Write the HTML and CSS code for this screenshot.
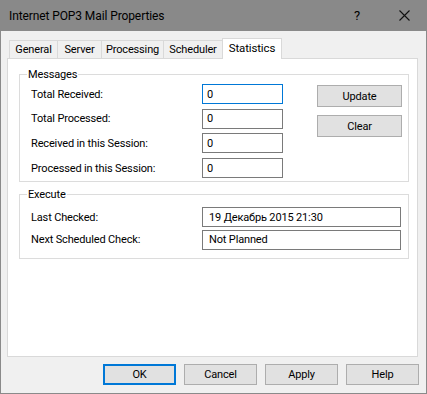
FILE: index.html
```html
<!DOCTYPE html>
<html>
<head>
<meta charset="utf-8">
<link rel="stylesheet" href="styles.css">
</head>
<body>
<div class="window">
  <div class="titlebar">
    <span class="title">Internet POP3 Mail Properties</span>
    <span class="help">?</span>
    <span class="close">
      <svg width="11" height="11" viewBox="0 0 11 11"><path d="M0.5 0.5 L10.5 10.5 M10.5 0.5 L0.5 10.5" stroke="#111" stroke-width="1.1" fill="none"/></svg>
    </span>
  </div>
  <div class="tabs">
    <div class="tab t-general">General</div>
    <div class="tab t-server">Server</div>
    <div class="tab t-processing">Processing</div>
    <div class="tab t-scheduler">Scheduler</div>
    <div class="tab t-statistics active">Statistics</div>
  </div>
  <div class="panel">
    <div class="group messages">
      <span class="group-title">Messages</span>
      <div class="msg-body">
        <div class="form-grid">
          <label>Total Received:</label><div class="field focused">0</div>
          <label>Total Processed:</label><div class="field">0</div>
          <label>Received in this Session:</label><div class="field">0</div>
          <label>Processed in this Session:</label><div class="field">0</div>
        </div>
        <div class="side-buttons">
          <div class="btn side">Update</div>
          <div class="btn side">Clear</div>
        </div>
      </div>
    </div>
    <div class="group execute">
      <span class="group-title">Execute</span>
      <div class="exec-grid">
        <label>Last Checked:</label><div class="field wide">19 Декабрь 2015 21:30</div>
        <label>Next Scheduled Check:</label><div class="field wide">Not Planned</div>
      </div>
    </div>
  </div>
  <div class="footer">
    <div class="btn foot default">OK</div>
    <div class="btn foot">Cancel</div>
    <div class="btn foot">Apply</div>
    <div class="btn foot">Help</div>
  </div>
</div>
</body>
</html>
```
FILE: styles.css
```css
* { box-sizing: border-box; }
html, body { margin: 0; padding: 0; background: #f0f0f0; }
body {
  font-family: Roboto, "Liberation Sans", sans-serif;
  font-size: 11px;
  letter-spacing: -0.15px;
  color: #000;
}
.window {
  width: 427px;
  height: 394px;
  border: 1px solid #8a8a8a;
  border-top: 0;
  background: #f0f0f0;
  display: flex;
  flex-direction: column;
}
.titlebar {
  height: 31px;
  margin: 0 -1px;
  background: #898989;
  display: flex;
  align-items: center;
  padding-left: 9px;
  flex-shrink: 0;
}
.title {
  font-size: 12px;
  letter-spacing: -0.1px;
  color: #000;
  flex: 1;
}
.help {
  font-size: 13px;
  width: 24px;
  text-align: center;
  margin-right: 30px;
}
.close {
  width: 14px;
  margin-right: 14px;
  display: flex;
  align-items: center;
}
.tabs {
  display: flex;
  align-items: flex-end;
  height: 20px;
  margin-top: 7px;
  margin-left: 8px;
  position: relative;
  z-index: 1;
  flex-shrink: 0;
}
.tab {
  height: 18px;
  border: 1px solid #d9d9d9;
  border-bottom: 0;
  background: #f0f0f0;
  display: flex;
  align-items: center;
  justify-content: center;
  margin-left: -1px;
}
.tab:first-child { margin-left: 0; }
.t-general { width: 49px; }
.t-server { width: 45px; }
.t-processing { width: 63px; }
.t-scheduler { width: 60px; }
.tab.active {
  width: 60px;
  height: 21px;
  margin-bottom: -1px;
  background: #fff;
  padding-bottom: 2px;
  font-size: 11.5px;
}
.panel {
  margin-left: 6px;
  width: 411px;
  height: 299px;
  background: #fff;
  border: 1px solid #d9d9d9;
  padding: 15px 0 0 11px;
  flex-shrink: 0;
}
.group {
  position: relative;
  border: 1px solid #dcdcdc;
  width: 390px;
}
.group-title {
  position: absolute;
  top: -8px;
  left: 7px;
  background: #fff;
  padding: 0 1px;
  line-height: 15px;
}
.messages {
  height: 108px;
  padding: 9px 0 0 11px;
}
.msg-body {
  display: flex;
}
.form-grid {
  display: grid;
  grid-template-columns: 171px 81px;
  grid-auto-rows: 20px;
  row-gap: 4.7px;
  align-items: center;
}
.field {
  height: 20px;
  border: 1px solid #7a7a7a;
  background: #fff;
  padding-left: 4px;
  display: flex;
  align-items: center;
}
.field.focused { border-color: #0078d7; }
.side-buttons {
  margin-left: 34px;
  margin-top: 1px;
  display: flex;
  flex-direction: column;
  gap: 8px;
}
.btn {
  background: #e1e1e1;
  border: 1px solid #adadad;
  display: flex;
  align-items: center;
  justify-content: center;
}
.btn.side {
  width: 85px;
  height: 22px;
}
.execute {
  margin-top: 12px;
  height: 65px;
  padding: 12px 0 0 11px;
}
.exec-grid {
  display: grid;
  grid-template-columns: 171px 199px;
  grid-auto-rows: 20px;
  row-gap: 2.5px;
  align-items: center;
}
.field.wide { padding-left: 6px; }
.footer {
  display: flex;
  gap: 8px;
  margin-top: 7px;
  margin-left: 102px;
}
.btn.foot {
  width: 73px;
  height: 21px;
}
.btn.default {
  border: 2px solid #0078d7;
}
```
